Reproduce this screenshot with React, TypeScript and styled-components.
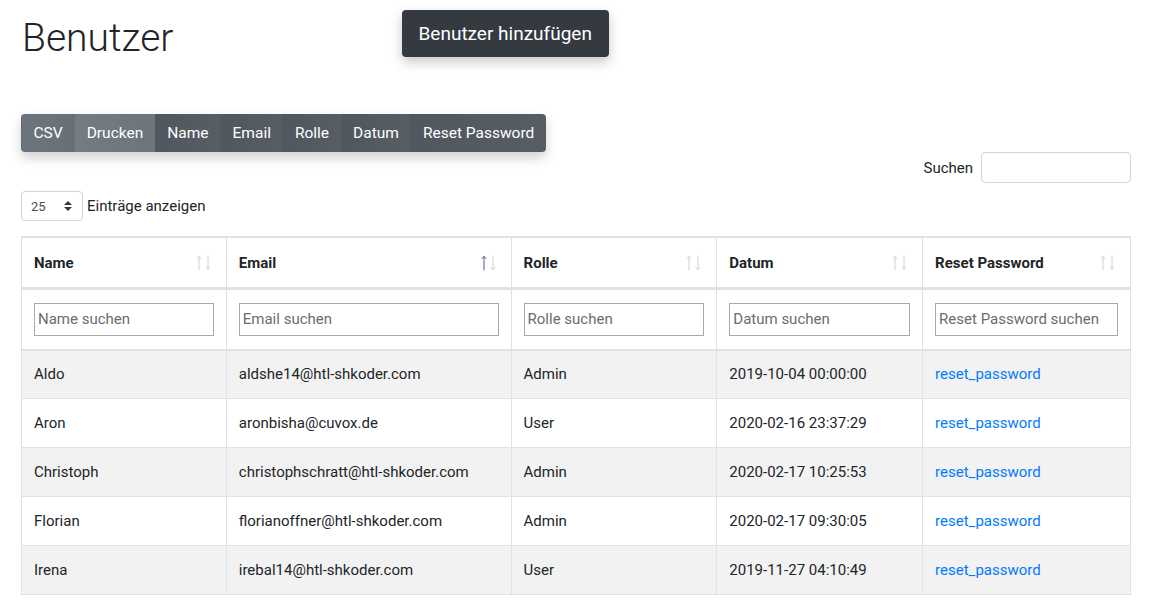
import React from 'react';
import styled, { createGlobalStyle } from 'styled-components';

const GlobalStyle = createGlobalStyle`
  body {
    margin: 0;
    background: #fff;
    font-family: Roboto, "Liberation Sans", sans-serif;
    color: #212529;
  }
`;

const Page = styled.div`
  padding: 10px 21px 0 21px;
`;

const Header = styled.div`
  display: flex;
  align-items: flex-start;
  gap: 228px;
`;

const Title = styled.h1`
  margin: 4px 0 0 1px;
  font-size: 39px;
  font-weight: 300;
  line-height: 48px;
  color: #212529;
`;

const AddButton = styled.button`
  height: 47px;
  padding: 0 17px;
  border: none;
  border-radius: 4px;
  background: #343a40;
  color: #fff;
  font-family: inherit;
  font-size: 19px;
  box-shadow: 0 5px 12px rgba(0, 0, 0, 0.22);
`;

const ButtonGroup = styled.div`
  display: inline-flex;
  margin-top: 52px;
  border-radius: 4px;
  overflow: hidden;
  box-shadow: 0 6px 12px rgba(0, 0, 0, 0.18);
`;

const GroupButton = styled.button<{ $tone: 'light' | 'lighter' | 'dark' }>`
  height: 38px;
  padding: 0 11.5px;
  border: none;
  border-left: 1px solid rgba(0, 0, 0, 0.04);
  color: #fff;
  font-family: inherit;
  font-size: 15.5px;
  background: ${(p) =>
    p.$tone === 'light'
      ? 'linear-gradient(90deg, #6c757d, #687077)'
      : p.$tone === 'lighter'
      ? 'linear-gradient(90deg, #737b83, #6c747c)'
      : 'linear-gradient(90deg, #50575e, #565d64)'};
`;

const Toolbar = styled.div`
  display: flex;
  justify-content: flex-end;
  align-items: center;
  gap: 8px;
`;

const Label = styled.label`
  font-size: 15px;
  color: #212529;
`;

const SearchInput = styled.input`
  width: 150px;
  height: 31px;
  box-sizing: border-box;
  border: 1px solid #ced4da;
  border-radius: 4px;
`;

const LengthRow = styled.div`
  display: flex;
  align-items: center;
  gap: 4px;
  margin-top: 8px;
`;

const LengthSelect = styled.div`
  width: 62px;
  height: 30px;
  box-sizing: border-box;
  border: 1px solid #ced4da;
  border-radius: 4px;
  display: flex;
  align-items: center;
  justify-content: space-between;
  padding: 0 10px 0 9px;
  font-size: 13px;
  color: #495057;
`;

const Table = styled.table`
  width: 1110px;
  margin-top: 15px;
  border-collapse: collapse;
  border-top: 2px solid #dee2e6;
  font-size: 15px;
`;

const HeadCell = styled.th<{ $width: number }>`
  width: ${(p) => p.$width}px;
  height: 51px;
  box-sizing: border-box;
  padding: 1px 12px 0 12px;
  border: 1px solid #dee2e6;
  border-bottom: 3px solid #dee2e6;
  text-align: left;
  font-size: 15px;
  font-weight: 700;
  vertical-align: middle;
`;

const HeadInner = styled.div`
  display: flex;
  align-items: center;
  justify-content: space-between;
`;

const FilterCell = styled.th`
  height: 59px;
  padding: 0 12px;
  border: 1px solid #dee2e6;
  border-bottom: 2px solid #dee2e6;
  font-weight: 400;
  vertical-align: middle;
`;

const FilterInput = styled.input`
  width: 100%;
  height: 33px;
  box-sizing: border-box;
  border: 1px solid #a9a9a9;
  padding: 0 3px;
  font-family: inherit;
  font-size: 15px;
  color: #212529;
  &::placeholder {
    color: #6c6c6c;
  }
`;

const Row = styled.tr<{ $striped: boolean }>`
  background: ${(p) => (p.$striped ? '#f2f2f2' : '#fff')};
`;

const Cell = styled.td`
  height: 49px;
  box-sizing: border-box;
  padding: 0 12px;
  border: 1px solid #dee2e6;
  vertical-align: middle;
`;

const ResetLink = styled.a`
  color: #007bff;
  text-decoration: none;
`;

const SortIcon = ({ active }: { active?: boolean }) => (
  <svg width="20" height="18" viewBox="0 0 20 18">
    <g fill="none" strokeWidth="1" strokeLinecap="round">
      <path d="M5 2.5 V16 M3 4.5 L5 2.5 L7 4.5" stroke={active ? '#6a4a7a' : '#d0d0d0'} />
      <path d="M14 2 V15.5 M12 13.5 L14 15.5 L16 13.5" stroke="#d0d0d0" />
    </g>
  </svg>
);

const SelectArrows = () => (
  <svg width="8" height="12" viewBox="0 0 8 12">
    <path d="M0 5 L4 1 L8 5 Z M0 7 L4 11 L8 7 Z" fill="#343a40" />
  </svg>
);

const columns = [
  { label: 'Name', width: 205 },
  { label: 'Email', width: 285, active: true },
  { label: 'Rolle', width: 206 },
  { label: 'Datum', width: 206 },
  { label: 'Reset Password', width: 208 },
];

const users = [
  { name: 'Aldo', email: 'aldshe14@htl-shkoder.com', role: 'Admin', date: '2019-10-04 00:00:00' },
  { name: 'Aron', email: 'aronbisha@cuvox.de', role: 'User', date: '2020-02-16 23:37:29' },
  { name: 'Christoph', email: 'christophschratt@htl-shkoder.com', role: 'Admin', date: '2020-02-17 10:25:53' },
  { name: 'Florian', email: 'florianoffner@htl-shkoder.com', role: 'Admin', date: '2020-02-17 09:30:05' },
  { name: 'Irena', email: 'irebal14@htl-shkoder.com', role: 'User', date: '2019-11-27 04:10:49' },
];

const App = () => (
  <Page>
    <GlobalStyle />
    <Header>
      <Title>Benutzer</Title>
      <AddButton>Benutzer hinzufügen</AddButton>
    </Header>
    <ButtonGroup>
      <GroupButton $tone="light">CSV</GroupButton>
      <GroupButton $tone="lighter">Drucken</GroupButton>
      {columns.map((c) => (
        <GroupButton key={c.label} $tone="dark">
          {c.label}
        </GroupButton>
      ))}
    </ButtonGroup>
    <Toolbar>
      <Label>Suchen</Label>
      <SearchInput />
    </Toolbar>
    <LengthRow>
      <LengthSelect>
        25
        <SelectArrows />
      </LengthSelect>
      <Label>Einträge anzeigen</Label>
    </LengthRow>
    <Table>
      <thead>
        <tr>
          {columns.map((c) => (
            <HeadCell key={c.label} $width={c.width}>
              <HeadInner>
                {c.label}
                <SortIcon active={c.active} />
              </HeadInner>
            </HeadCell>
          ))}
        </tr>
        <tr>
          {columns.map((c) => (
            <FilterCell key={c.label}>
              <FilterInput placeholder={`${c.label} suchen`} />
            </FilterCell>
          ))}
        </tr>
      </thead>
      <tbody>
        {users.map((u, i) => (
          <Row key={u.email} $striped={i % 2 === 0}>
            <Cell>{u.name}</Cell>
            <Cell>{u.email}</Cell>
            <Cell>{u.role}</Cell>
            <Cell>{u.date}</Cell>
            <Cell>
              <ResetLink href="#">reset_password</ResetLink>
            </Cell>
          </Row>
        ))}
      </tbody>
    </Table>
  </Page>
);

export default App;
